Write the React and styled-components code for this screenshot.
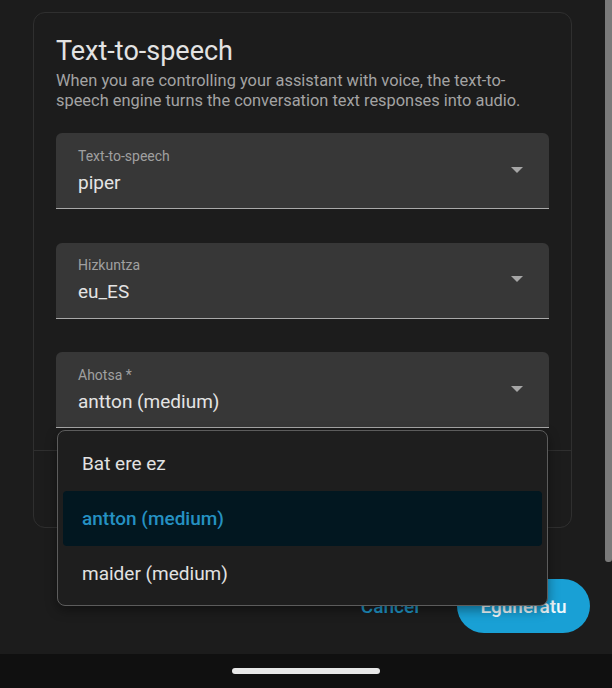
import React from "react";
import styled, { createGlobalStyle } from "styled-components";

const Global = createGlobalStyle`
  html, body { margin: 0; padding: 0; background: #1c1c1c; }
  body { font-family: Roboto, "Noto Sans", sans-serif; -webkit-font-smoothing: antialiased; }
`;

const Screen = styled.div`
  width: 612px;
  height: 688px;
  display: flex;
  flex-direction: column;
  background: #1c1c1c;
  overflow: hidden;
`;

const Body = styled.div`
  flex: 1;
  display: flex;
  min-height: 0;
`;

const Content = styled.div`
  flex: 1;
  display: flex;
  flex-direction: column;
  padding: 12px 15px 0 33px;
`;

const ScrollTrack = styled.div`
  width: 7px;
  display: flex;
  flex-direction: column;
`;

const ScrollThumb = styled.div`
  height: 562px;
  background: #7a7a7a;
  border-radius: 0 0 3px 3px;
`;

const Card = styled.section`
  width: 539px;
  height: 516px;
  box-sizing: border-box;
  border: 1px solid #2f2f2f;
  border-radius: 12px;
  display: flex;
  flex-direction: column;
`;

const CardBody = styled.div`
  padding: 21px 22px 0 22px;
  display: flex;
  flex-direction: column;
`;

const Title = styled.h2`
  margin: 0;
  font-size: 27px;
  font-weight: 400;
  line-height: 34px;
  color: #e3e3e3;
`;

const Description = styled.p`
  margin: 3px 0 0 0;
  font-size: 16.4px;
  line-height: 19.5px;
  color: #a3a3a3;
`;

const Fields = styled.div`
  display: flex;
  flex-direction: column;
  gap: 33.5px;
  margin-top: 23px;
`;

const FieldWrap = styled.div`
  position: relative;
`;

const Field = styled.div`
  height: 76px;
  box-sizing: border-box;
  background: #373737;
  border-radius: 6px 6px 0 0;
  border-bottom: 1.5px solid #a9a9a9;
  display: flex;
  align-items: center;
  padding: 0 26px 0 22px;
`;

const FieldText = styled.div`
  flex: 1;
  display: flex;
  flex-direction: column;
`;

const Label = styled.span`
  font-size: 14px;
  line-height: 18px;
  color: #a0a0a0;
`;

const Value = styled.span`
  font-size: 19px;
  line-height: 24px;
  color: #e4e4e4;
  margin-top: 6px;
`;

const Arrow = styled.svg`
  width: 12px;
  height: 6px;
  margin-top: -2px;
`;

const Divider = styled.div`
  height: 1px;
  background: #2f2f2f;
  margin-top: 22px;
`;

const Menu = styled.ul`
  position: absolute;
  z-index: 5;
  top: calc(100% + 2px);
  left: 1px;
  width: 491px;
  margin: 0;
  padding: 5px 0 4px;
  list-style: none;
  box-sizing: border-box;
  background: #1e1e1e;
  border: 1px solid #5c5c5c;
  border-radius: 8px;
  box-shadow: 0 4px 12px rgba(0, 0, 0, 0.4);
`;

const Item = styled.li`
  height: 55px;
  margin: 0 5px;
  padding-left: 19px;
  display: flex;
  align-items: center;
  border-radius: 4px;
  font-size: 19px;
  color: ${(p) => (p.$selected ? "#2591c2" : "#e2e2e2")};
  background: ${(p) => (p.$selected ? "#021720" : "transparent")};
  font-weight: ${(p) => (p.$selected ? 500 : 400)};
`;

const Actions = styled.div`
  display: flex;
  justify-content: flex-end;
  align-items: center;
  gap: 38px;
  margin-top: 51px;
`;

const TextButton = styled.button`
  background: none;
  border: 0;
  padding: 0;
  font-family: inherit;
  font-size: 19px;
  font-weight: 500;
  color: #1e93c4;
`;

const PillButton = styled.button`
  height: 54px;
  width: 133px;
  border: 0;
  border-radius: 27px;
  background: #19a0d5;
  color: #eef8fc;
  font-family: inherit;
  font-size: 19px;
  font-weight: 500;
`;

const NavBar = styled.div`
  height: 34px;
  background: #101010;
  display: flex;
  align-items: center;
  justify-content: center;
`;

const HomeIndicator = styled.div`
  width: 148px;
  height: 6px;
  border-radius: 3px;
  background: #e8e8e8;
`;

const DropArrow = () => (
  <Arrow viewBox="0 0 12 6">
    <path d="M0 0 L12 0 L6 6 Z" fill="#a6a6a6" />
  </Arrow>
);

const SelectField = ({ label, value, children }) => (
  <FieldWrap>
    <Field>
      <FieldText>
        <Label>{label}</Label>
        <Value>{value}</Value>
      </FieldText>
      <DropArrow />
    </Field>
    {children}
  </FieldWrap>
);

export default function App() {
  return (
    <Screen>
      <Global />
      <Body>
        <Content>
          <Card>
            <CardBody>
              <Title>Text-to-speech</Title>
              <Description>
                When you are controlling your assistant with voice, the text-to-speech engine turns the conversation text responses into audio.
              </Description>
              <Fields>
                <SelectField label="Text-to-speech" value="piper" />
                <SelectField label="Hizkuntza" value="eu_ES" />
                <SelectField label="Ahotsa *" value="antton (medium)">
                  <Menu>
                    <Item>Bat ere ez</Item>
                    <Item $selected>antton (medium)</Item>
                    <Item>maider (medium)</Item>
                  </Menu>
                </SelectField>
              </Fields>
            </CardBody>
            <Divider />
          </Card>
          <Actions>
            <TextButton>Cancel</TextButton>
            <PillButton>Eguneratu</PillButton>
          </Actions>
        </Content>
        <ScrollTrack>
          <ScrollThumb />
        </ScrollTrack>
      </Body>
      <NavBar>
        <HomeIndicator />
      </NavBar>
    </Screen>
  );
}
